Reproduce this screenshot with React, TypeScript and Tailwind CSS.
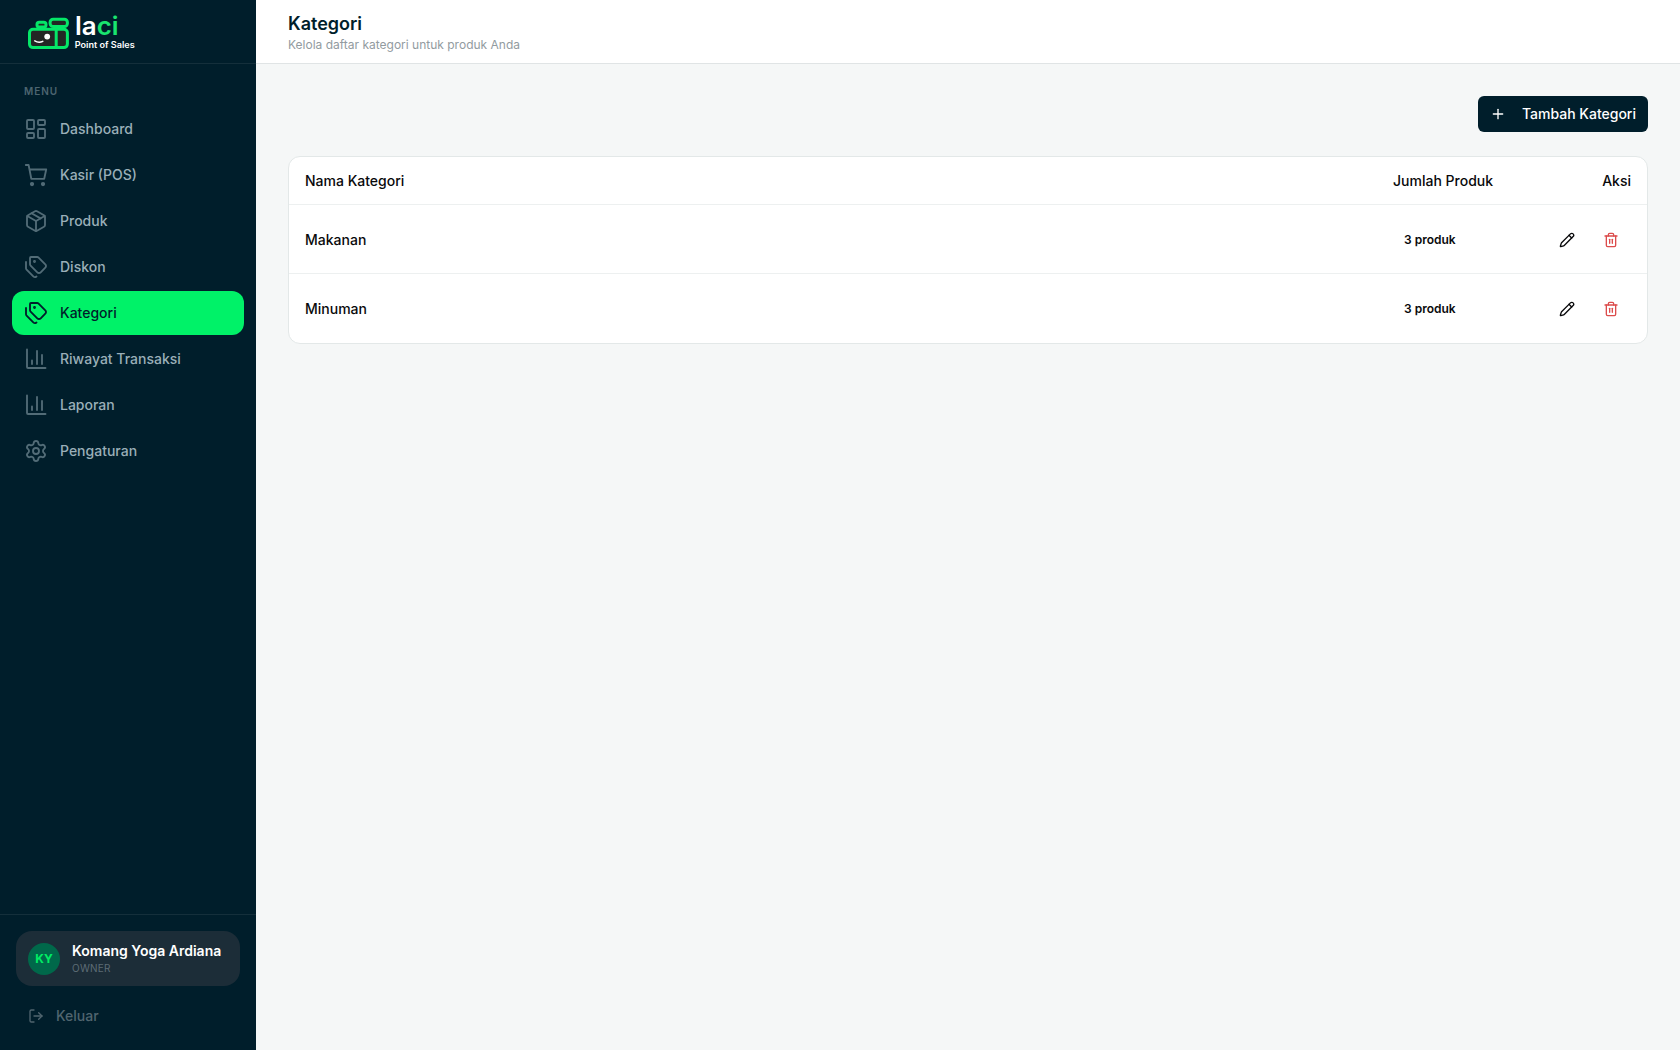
import type { LucideIcon } from 'lucide-react';
import { LayoutDashboard, LogOut, Package, Pencil, Plus, Settings, Tags, Trash2 } from 'lucide-react';
import clsx from 'clsx';

interface IconProps {
  className?: string;
  strokeWidth?: number;
}

function CartIcon({ className, strokeWidth = 2 }: IconProps) {
  return (
    <svg viewBox="0 0 24 24" fill="none" stroke="currentColor" strokeWidth={strokeWidth} strokeLinecap="round" strokeLinejoin="round" className={className}>
      <circle cx="8" cy="21" r="1.2" fill="currentColor" />
      <circle cx="19" cy="21" r="1.2" fill="currentColor" />
      <path d="M1.8 2H4.6L7.3 15.8H20.2L22.2 6.5H5.5" />
    </svg>
  );
}

function ChartIcon({ className, strokeWidth = 2 }: IconProps) {
  return (
    <svg viewBox="0 0 24 24" fill="none" stroke="currentColor" strokeWidth={strokeWidth} strokeLinecap="round" strokeLinejoin="round" className={className}>
      <path d="M3 2.5v17.5a1 1 0 0 0 1 1h17.5" />
      <path d="M18 17V8" />
      <path d="M13 17V4" />
      <path d="M8 17v-3.5" />
    </svg>
  );
}

interface MenuItem {
  label: string;
  icon: LucideIcon | typeof CartIcon;
  active?: boolean;
}

const menu: MenuItem[] = [
  { label: 'Dashboard', icon: LayoutDashboard },
  { label: 'Kasir (POS)', icon: CartIcon },
  { label: 'Produk', icon: Package },
  { label: 'Diskon', icon: Tags },
  { label: 'Kategori', icon: Tags, active: true },
  { label: 'Riwayat Transaksi', icon: ChartIcon },
  { label: 'Laporan', icon: ChartIcon },
  { label: 'Pengaturan', icon: Settings },
];

const categories = [
  { name: 'Makanan', total: 3 },
  { name: 'Minuman', total: 3 },
];

function Logo() {
  return (
    <svg viewBox="0 0 120 48" className="h-12 w-[120px] overflow-visible">
      {/* cash register */}
      <g transform="translate(-0.4 8.3)">
        <g stroke="#05e768" strokeWidth="3" fill="#232624">
          <rect x="9.4" y="6" width="9" height="4.8" rx="2.2" />
          <rect x="22.5" y="3" width="17.3" height="7.2" rx="3" />
          <rect x="1.9" y="13" width="37.9" height="18.3" rx="3.5" />
          <path d="M28.6 13v18.3" />
        </g>
        <circle cx="19.6" cy="20.3" r="2.9" fill="#fff" />
        <path d="M7.2 24.6q4 2.4 8 .4" fill="none" stroke="#fff" strokeWidth="1.5" strokeLinecap="round" />
      </g>
      <text x="47" y="27" fill="#fff" fontFamily="Inter, sans-serif" fontSize="25.5" fontWeight="600" textLength="43.5" lengthAdjust="spacingAndGlyphs">
        la<tspan fill="#19e56f">ci</tspan>
      </text>
      <text x="46.7" y="40.3" fill="#fff" fontFamily="Inter, sans-serif" fontSize="8.5" fontWeight="600" textLength="60" lengthAdjust="spacingAndGlyphs">
        Point of Sales
      </text>
    </svg>
  );
}

function Sidebar() {
  return (
    <aside className="flex w-64 shrink-0 flex-col bg-[#001e2b]">
      <div className="flex h-16 items-center border-b border-[#142f3b] pl-7">
        <Logo />
      </div>

      <nav className="flex-1 px-3 pt-5">
        <p className="mb-2 px-3 text-[10px] leading-[15px] font-semibold tracking-[1px] text-[#4d6570]">MENU</p>
        <ul className="space-y-0.5">
          {menu.map(({ label, icon: Icon, active }) => (
            <li
              key={label}
              className={clsx(
                'flex h-11 items-center gap-3 rounded-xl px-3 text-sm font-medium',
                active ? 'bg-[#00f268] text-[#001e2b]' : 'text-[#9aafb8]',
              )}
            >
              <Icon className={clsx('size-6 shrink-0', !active && 'text-[#526c77]')} strokeWidth={1.85} />
              {label}
            </li>
          ))}
        </ul>
      </nav>

      <div className="border-t border-[#142f3b] p-4">
        <div className="flex h-[55px] items-center gap-3 rounded-2xl bg-[#1c2d38] px-3">
          <div className="flex size-8 items-center justify-center rounded-full bg-[#00684a] text-xs font-bold text-[#00ed64]">KY</div>
          <div>
            <p className="text-sm leading-5 font-semibold text-white">Komang Yoga Ardiana</p>
            <p className="text-[10px] leading-[15px] tracking-[0.25px] text-[#5c6c75]">OWNER</p>
          </div>
        </div>
        <button className="mt-3 flex h-9 items-center gap-3 px-3 text-sm font-medium text-[#50656f]">
          <LogOut className="size-4" />
          Keluar
        </button>
      </div>
    </aside>
  );
}

function CategoryTable() {
  return (
    <div className="mt-6 overflow-hidden rounded-xl border border-[#e3e8e8] bg-white">
      <table className="w-full table-fixed text-sm font-medium text-[#09090b]">
        <colgroup>
          <col />
          <col className="w-[132px]" />
          <col className="w-[138px]" />
        </colgroup>
        <thead>
          <tr className="h-[47.5px] border-b border-[#edf0f0]">
            <th className="px-4 text-left font-medium">Nama Kategori</th>
            <th className="px-4 text-left font-medium whitespace-nowrap">Jumlah Produk</th>
            <th className="px-4 text-right font-medium">Aksi</th>
          </tr>
        </thead>
        <tbody>
          {categories.map(cat => (
            <tr key={cat.name} className="h-[69px] border-b border-[#edf0f0] last:border-0">
              <td className="px-4 pt-px">{cat.name}</td>
              <td className="px-4 pt-px">
                <div className="px-[11px] text-xs font-semibold">{cat.total} produk</div>
              </td>
              <td className="px-4 pt-px">
                <div className="flex justify-end gap-1">
                  <button className="flex size-10 items-center justify-center">
                    <Pencil className="size-4" />
                  </button>
                  <button className="flex size-10 items-center justify-center text-[#dc4c4c]">
                    <Trash2 className="size-4" />
                  </button>
                </div>
              </td>
            </tr>
          ))}
        </tbody>
      </table>
    </div>
  );
}

export default function App() {
  return (
    <div className="flex h-screen overflow-hidden bg-[#f5f7f7] font-['Inter',sans-serif]">
      <Sidebar />
      <div className="flex min-w-0 flex-1 flex-col">
        <header className="flex h-16 flex-col justify-center border-b border-[#e0e4e5] bg-white px-8 pt-[3px]">
          <h1 className="text-lg leading-[22px] font-semibold text-[#001e2b]">Kategori</h1>
          <p className="mt-0.5 text-xs leading-4 text-[#929b9f]">Kelola daftar kategori untuk produk Anda</p>
        </header>
        <main className="flex-1 p-8">
          <div className="flex justify-end">
            <button className="flex h-9 items-center gap-4 rounded-md bg-[#001e2b] px-3 text-sm font-medium text-white">
              <Plus className="size-4" />
              Tambah Kategori
            </button>
          </div>
          <CategoryTable />
        </main>
      </div>
    </div>
  );
}
